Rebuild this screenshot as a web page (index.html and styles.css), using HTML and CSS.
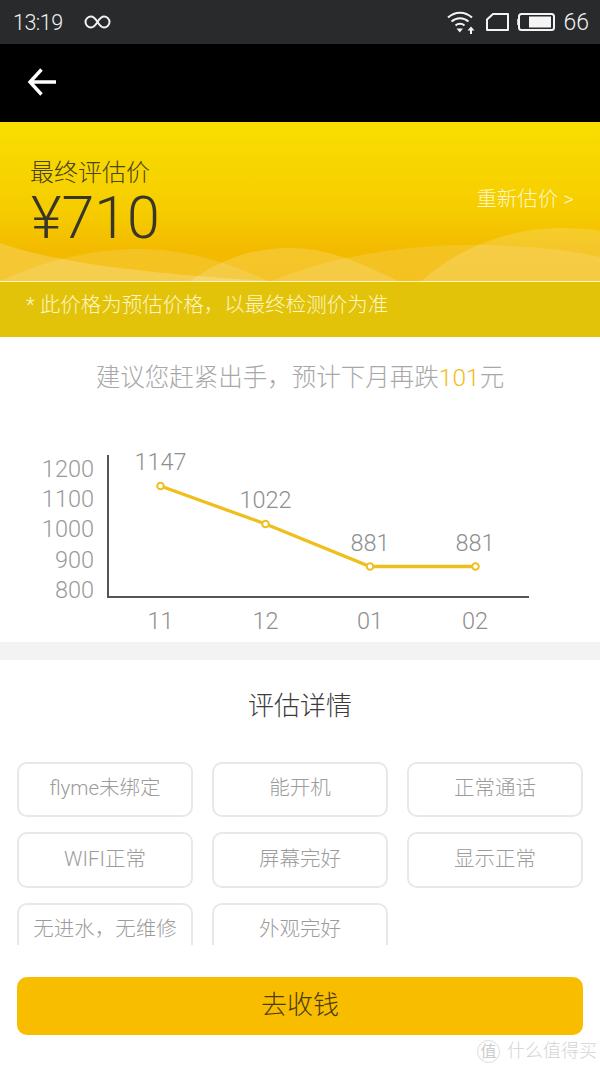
FILE: index.html
```html
<!DOCTYPE html>
<html lang="zh">
<head>
<meta charset="utf-8">
<title>最终评估价</title>
<link rel="stylesheet" href="styles.css">
</head>
<body>
<div class="phone">
  <header class="status">
    <div class="status-left">
      <span class="time">13:19</span>
      <svg class="inf" width="27" height="16" viewBox="0 0 26 16"><path d="M13 8C10.500 4 8.500 2.500 6.500 2.500A5.500 5.500 0 0 0 6.500 13.500C8.500 13.500 10.500 12 13 8C15.500 4 17.500 2.500 19.500 2.500A5.500 5.500 0 0 1 19.500 13.500C17.500 13.500 15.500 12 13 8Z" fill="none" stroke="#f2f2f2" stroke-width="2"/></svg>
    </div>
    <div class="status-right">
      <svg class="wifi" width="28" height="24" viewBox="0 0 28 24"><g fill="none" stroke="#f4f4f4" stroke-width="2"><path d="M1 7.500C8 1 18 1 25 7.500"/><path d="M4.500 11.500C9.500 7 16.500 7 21.500 11.500"/><path d="M8.500 15.500C11 13.300 15 13.300 17.500 15.500"/></g><path d="M9.500 18.500H16L12.750 22.500Z" fill="#f4f4f4"/><path d="M24 16.500L27.500 20.500H25V24H23V20.500H20.500Z" fill="#f4f4f4"/></svg>
      <svg class="sim" width="23" height="18" viewBox="0 0 23 18"><path d="M7 1H22V17H1V6.500Z" fill="none" stroke="#f4f4f4" stroke-width="2" stroke-linejoin="round"/></svg>
      <svg class="batt" width="38" height="18" viewBox="0 0 38 18"><rect x="2" y="1" width="35" height="16" rx="2.500" fill="none" stroke="#f4f4f4" stroke-width="2"/><rect x="12" y="3.500" width="22" height="11" fill="#f4f4f4"/><rect x="0" y="6" width="1" height="6" fill="#ccc"/></svg>
      <span class="level">66</span>
    </div>
  </header>

  <nav class="nav">
    <svg width="30" height="30" viewBox="0 0 30 30"><path d="M14.500 2.500L3 15L14.500 27.500M3.500 15H29" fill="none" stroke="#fff" stroke-width="3.400"/></svg>
  </nav>

  <section class="hero">
    <svg class="waves" width="600" height="159" viewBox="0 0 600 159" preserveAspectRatio="none">
      <path d="M0 121C60 143 170 153 270 159H0Z" fill="#fff" opacity=".2"/>
      <path d="M0 159C40 140 90 127 140 127C190 127 240 145 268 159Z" fill="#fff" opacity=".13"/>
      <path d="M190 159C220 138 250 126 290 126C325 126 355 138 398 159Z" fill="#fff" opacity=".16"/>
      <path d="M272 159C330 135 400 123 470 123C525 123 570 128 600 135V159Z" fill="#fff" opacity=".13"/>
      <path d="M421 159C460 125 510 106 560 106C575 106 590 107 600 109V159Z" fill="#fff" opacity=".16"/>
    </svg>
    <div class="hero-main">
      <div class="hero-label">最终评估价</div>
      <div class="hero-price">¥710</div>
    </div>
    <a class="hero-link">重新估价 &gt;</a>
  </section>
  <div class="note">* 此价格为预估价格，以最终检测价为准</div>

  <p class="advice">建议您赶紧出手，预计下月再跌<em>101</em>元</p>

  <svg class="chart" width="600" height="222" viewBox="0 420 600 222">
    <path class="axis" d="M108 455V597H529"/>
    <g class="ylab">
      <text x="94" y="477">1200</text>
      <text x="94" y="507">1100</text>
      <text x="94" y="537">1000</text>
      <text x="94" y="568">900</text>
      <text x="94" y="598">800</text>
    </g>
    <g class="vlab">
      <text x="160.500" y="470">1147</text>
      <text x="265.500" y="508">1022</text>
      <text x="370" y="551">881</text>
      <text x="475" y="551">881</text>
      <text x="160.500" y="629">11</text>
      <text x="265.500" y="629">12</text>
      <text x="370" y="629">01</text>
      <text x="475" y="629">02</text>
    </g>
    <path class="line" d="M160.500 486L265.500 524L370 566.500H475.500"/>
    <g class="dots">
      <circle cx="160.500" cy="486" r="3.300"/>
      <circle cx="265.500" cy="524" r="3.300"/>
      <circle cx="370" cy="566.500" r="3.300"/>
      <circle cx="475.500" cy="566.500" r="3.300"/>
    </g>
  </svg>

  <div class="gap"></div>

  <section class="detail">
    <h2 class="detail-title">评估详情</h2>
    <ul class="tags">
      <li class="tag">flyme未绑定</li>
      <li class="tag">能开机</li>
      <li class="tag">正常通话</li>
      <li class="tag">WIFI正常</li>
      <li class="tag">屏幕完好</li>
      <li class="tag">显示正常</li>
      <li class="tag">无进水，无维修</li>
      <li class="tag">外观完好</li>
    </ul>
  </section>

  <div class="footer"><button class="cta">去收钱</button></div>

  <div class="watermark">
    <span class="wm-badge">值</span><span class="wm-text">什么值得买</span>
  </div>
</div>
</body>
</html>
```
FILE: styles.css
```css
* { box-sizing: border-box; }
html, body { margin: 0; padding: 0; }
body {
  width: 600px;
  height: 1067px;
  overflow: hidden;
  background: #fff;
  font-family: Roboto, "Noto Sans CJK SC", sans-serif;
}
.phone { position: relative; width: 600px; height: 1067px; overflow: hidden; }

.status {
  height: 44px;
  background: #292a2c;
  color: #f0f0f0;
  display: flex;
  align-items: center;
  justify-content: space-between;
  padding: 0 11px 0 13px;
}
.status-left, .status-right { display: flex; align-items: center; }
.time { font-size: 21.500px; font-weight: 300; letter-spacing: -.5px; }
.inf { margin-left: 21px; }
.status-right svg { display: block; }
.sim { margin-left: 11px; }
.batt { margin-left: 8px; }
.level { font-size: 23px; font-weight: 300; margin-left: 8px; }

.nav {
  height: 78px;
  background: #000;
  display: flex;
  align-items: center;
  padding: 0 0 3px 27px;
}
.nav svg { display: block; }

.hero {
  position: relative;
  height: 159px;
  background: linear-gradient(180deg, #f9de00 0%, #f6cd00 55%, #f3bb00 80%, #f3b800 100%);
  display: flex;
  justify-content: space-between;
  align-items: flex-start;
  padding: 34px 26px 0 30px;
  overflow: hidden;
}
.waves { position: absolute; left: 0; top: 0; }
.hero-main { position: relative; }
.hero-label { font-size: 24px; line-height: 35px; color: #4b4420; font-weight: 300; }
.hero-price { font-size: 59px; line-height: 52px; color: #38362a; font-weight: 300; padding-left: 1px; margin-top: 1px; }
.hero-link { position: relative; margin-top: 28px; font-size: 20.500px; line-height: 30px; color: #fff6c8; font-weight: 300; }

.note {
  height: 57px;
  margin-top: -1px;
  border-top: 2px solid #fdf6c0;
  background: #e2c30a;
  color: #fdf6c5;
  font-size: 20.500px;
  font-weight: 300;
  line-height: 47px;
  padding-left: 26px;
}

.advice {
  margin: 0;
  height: 83px;
  padding-top: 24px;
  text-align: center;
  font-size: 24.500px;
  line-height: 34px;
  font-weight: 300;
  color: #a8a8a8;
}
.advice em { font-style: normal; color: #f0bd18; }

.chart { display: block; }
.axis { fill: none; stroke: #555; stroke-width: 2; }
.ylab text { font-size: 23.500px; font-weight: 300; fill: #9a9a9a; text-anchor: end; }
.vlab text { font-size: 23.500px; font-weight: 300; fill: #8f8f8f; text-anchor: middle; }
.line { fill: none; stroke: #efbf1d; stroke-width: 3.300; }
.dots circle { fill: #fff; stroke: #efbf1d; stroke-width: 2; }

.gap { height: 18px; background: #f3f3f3; }

.detail { height: 285px; overflow: hidden; padding: 0 17px; }
.detail-title {
  margin: 0;
  height: 102px;
  padding-top: 27px;
  text-align: center;
  font-size: 26px;
  line-height: 38px;
  font-weight: 300;
  color: #3c3c3c;
}
.tags {
  list-style: none;
  margin: 0;
  padding: 0;
  display: grid;
  grid-template-columns: repeat(3, 176px);
  grid-auto-rows: 55.400px;
  column-gap: 19px;
  row-gap: 15px;
}
.tag {
  border: 2px solid #e8e8e8;
  border-radius: 10px;
  display: flex;
  align-items: center;
  justify-content: center;
  padding-bottom: 7px;
  font-size: 20.500px;
  font-weight: 300;
  color: #9c9c9c;
  white-space: nowrap;
}

.footer { padding: 32px 17px 0; }
.cta {
  display: block;
  width: 100%;
  height: 58px;
  border: 0;
  border-radius: 10px;
  background: #f9bd00;
  color: #4a3c10;
  font-family: inherit;
  font-size: 26px;
  font-weight: 300;
  padding: 0 0 7px;
}

.watermark {
  position: absolute;
  left: 477px;
  top: 1039px;
  display: flex;
  align-items: center;
  color: #c9c9c9;
}
.wm-badge {
  width: 23px;
  height: 23px;
  border: 1px solid #dcdcdc;
  border-radius: 50%;
  font-size: 16px;
  line-height: 21px;
  text-align: center;
  color: #cccccc;
}
.wm-text { margin-left: 7px; font-size: 18px; line-height: 24px; font-weight: 300; color: #d4d4d4; }
```
